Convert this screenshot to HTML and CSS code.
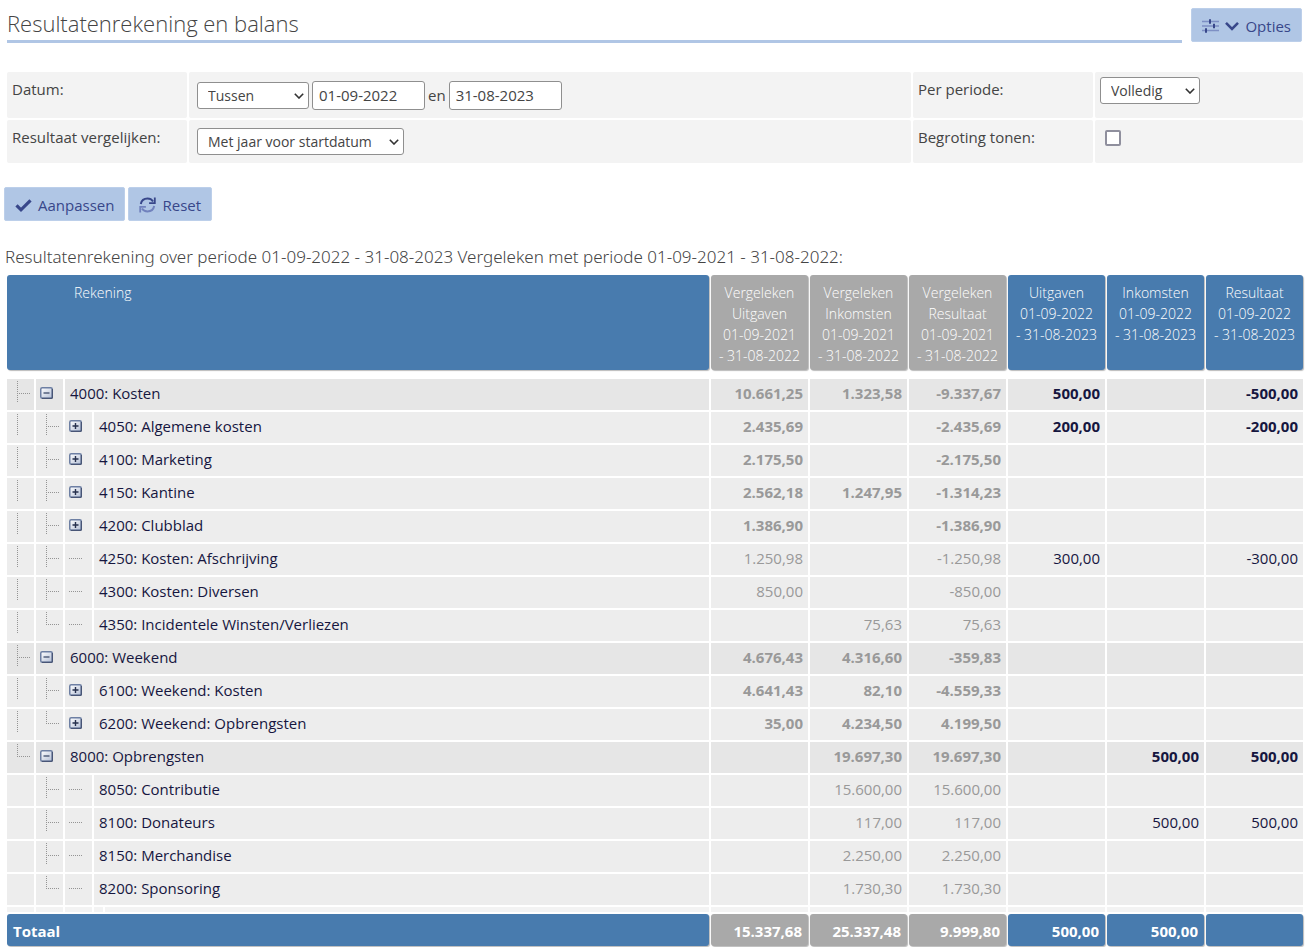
FILE: index.html
```html
<!DOCTYPE html>
<html lang="nl">
<head>
<meta charset="utf-8">
<meta name="viewport" content="width=device-width, initial-scale=1">
<title>Resultatenrekening en balans</title>
<link rel="stylesheet" href="styles.css">
</head>
<body>
<svg class="sprite" aria-hidden="true">
  <defs>
    <linearGradient id="face" x1="0" y1="0" x2="1" y2="1"><stop offset="0" stop-color="#ffffff"/><stop offset="1" stop-color="#b4bfd6"/></linearGradient>
  </defs>
  <symbol id="tee" viewBox="0 0 27 31"><path d="M10.5 2v22M12 14.500h11" class="dots"/></symbol>
  <symbol id="line" viewBox="0 0 27 31"><path d="M10.500 2v22" class="dots"/></symbol>
  <symbol id="ell" viewBox="0 0 27 31"><path d="M10.500 2v13M12 14.500h11" class="dots"/></symbol>
  <symbol id="dash" viewBox="0 0 27 31"><path d="M4 14.500h14" class="dots"/></symbol>
  <symbol id="minus" viewBox="0 0 13 12"><rect x=".75" y=".75" width="11.500" height="10.500" rx="1.500" fill="url(#face)" stroke="#6d7fa3" stroke-width="1.500"/><path d="M12.300 2v9.300H2" fill="none" stroke="#3f4c6b"/><path d="M3.500 6h6" stroke="#3f4c6b" stroke-width="1.300"/></symbol>
  <symbol id="plus" viewBox="0 0 13 12"><rect x=".75" y=".75" width="11.500" height="10.500" rx="1.500" fill="url(#face)" stroke="#6d7fa3" stroke-width="1.500"/><path d="M12.300 2v9.300H2" fill="none" stroke="#3f4c6b"/><path d="M3.500 6h6M6.500 3v6" stroke="#26304d" stroke-width="1.400"/></symbol>
  <symbol id="chevron" viewBox="0 0 10 6"><path d="M.8.8 5 5 9.200.8" fill="none" stroke="#333" stroke-width="1.600"/></symbol>
</svg>

<header class="page-head">
  <h1 class="title">Resultatenrekening en balans</h1>
  <button class="btn" type="button">
    <svg class="icon" viewBox="0 0 17 16" aria-hidden="true"><path d="M0 3.500h17M0 8h17M0 12.500h17" stroke="#7d8fc4" stroke-width="1.400"/><path d="M8 1.300v4.400M12 5.800v4.400M4 10.300v4.400" stroke="#38478a" stroke-width="2"/></svg>
    <svg class="icon-caret" viewBox="0 0 14 10" aria-hidden="true"><path d="M1 1.800 7 7.800l6-6" fill="none" stroke="#38478a" stroke-width="2.600"/></svg>
    Opties
  </button>
</header>

<form class="filters">
  <div class="fields">
    <label class="field-name" for="datum">Datum:</label>
    <div class="field main">
      <span class="select type"><select id="datum"><option>Tussen</option></select><svg aria-hidden="true"><use href="#chevron"/></svg></span>
      <input class="date" type="text" value="01-09-2022" aria-label="Startdatum">
      <span>en</span>
      <input class="date" type="text" value="31-08-2023" aria-label="Einddatum">
    </div>
    <label class="field-name" for="periode">Per periode:</label>
    <div class="field side">
      <span class="select period"><select id="periode"><option>Volledig</option></select><svg aria-hidden="true"><use href="#chevron"/></svg></span>
    </div>
    <label class="field-name" for="vergelijk">Resultaat vergelijken:</label>
    <div class="field main">
      <span class="select compare"><select id="vergelijk"><option>Met jaar voor startdatum</option></select><svg aria-hidden="true"><use href="#chevron"/></svg></span>
    </div>
    <label class="field-name" for="begroting">Begroting tonen:</label>
    <div class="field side"><input class="check" type="checkbox" id="begroting"></div>
  </div>
  <div class="actions">
    <button class="btn" type="submit">
      <svg class="icon" viewBox="0 0 17 16" aria-hidden="true"><path d="M1.500 8.300 6 12.800 15.500 3.300" fill="none" stroke="#38478a" stroke-width="3.200"/></svg>
      Aanpassen
    </button>
    <button class="btn" type="reset">
      <svg class="icon" viewBox="0 0 17 16" aria-hidden="true"><path d="M1.800 7C2.500 3.700 5.200 1.600 8.500 1.600c2.300 0 4.300 1 5.600 2.900" fill="none" stroke="#38478a" stroke-width="2"/><path d="M15.800.5v5.700h-5.700" fill="none" stroke="#38478a" stroke-width="1.800"/><path d="M15.200 9c-.7 3.300-3.400 5.400-6.700 5.400-2.300 0-4.300-1-5.600-2.900" fill="none" stroke="#7182bd" stroke-width="2"/><path d="M1.200 15.500V9.800h5.700" fill="none" stroke="#7182bd" stroke-width="1.800"/></svg>
      Reset
    </button>
  </div>
</form>

<h2 class="subtitle">Resultatenrekening over periode 01-09-2022 - 31-08-2023 Vergeleken met periode 01-09-2021 - 31-08-2022:</h2>

<table class="ledger">
  <colgroup><col class="tree"><col class="tree"><col class="tree"><col class="nub"><col><col class="amount" span="6"></colgroup>
  <thead>
    <tr>
      <th class="account" colspan="5" scope="col">Rekening</th>
      <th class="past" scope="col">Vergeleken Uitgaven<br>01-09-2021<br>- 31-08-2022</th>
      <th class="past" scope="col">Vergeleken Inkomsten<br>01-09-2021<br>- 31-08-2022</th>
      <th class="past" scope="col">Vergeleken Resultaat<br>01-09-2021<br>- 31-08-2022</th>
      <th scope="col">Uitgaven<br>01-09-2022<br>- 31-08-2023</th>
      <th scope="col">Inkomsten<br>01-09-2022<br>- 31-08-2023</th>
      <th scope="col">Resultaat<br>01-09-2022<br>- 31-08-2023</th>
    </tr>
  </thead>
  <tbody>
    <tr class="gap"><td colspan="11"></td></tr>
    <tr class="group sum"><td><svg><use href="#tee"/></svg></td><td><button class="toggle" aria-label="Inklappen"><svg><use href="#minus"/></svg></button></td><td class="name" colspan="3">4000: Kosten</td><td class="past">10.661,25</td><td class="past">1.323,58</td><td class="past">-9.337,67</td><td>500,00</td><td></td><td>-500,00</td></tr>
    <tr class="sum"><td><svg><use href="#line"/></svg></td><td><svg><use href="#tee"/></svg></td><td><button class="toggle" aria-label="Uitklappen"><svg><use href="#plus"/></svg></button></td><td class="name" colspan="2">4050: Algemene kosten</td><td class="past">2.435,69</td><td></td><td class="past">-2.435,69</td><td>200,00</td><td></td><td>-200,00</td></tr>
    <tr class="sum"><td><svg><use href="#line"/></svg></td><td><svg><use href="#tee"/></svg></td><td><button class="toggle" aria-label="Uitklappen"><svg><use href="#plus"/></svg></button></td><td class="name" colspan="2">4100: Marketing</td><td class="past">2.175,50</td><td></td><td class="past">-2.175,50</td><td></td><td></td><td></td></tr>
    <tr class="sum"><td><svg><use href="#line"/></svg></td><td><svg><use href="#tee"/></svg></td><td><button class="toggle" aria-label="Uitklappen"><svg><use href="#plus"/></svg></button></td><td class="name" colspan="2">4150: Kantine</td><td class="past">2.562,18</td><td class="past">1.247,95</td><td class="past">-1.314,23</td><td></td><td></td><td></td></tr>
    <tr class="sum"><td><svg><use href="#line"/></svg></td><td><svg><use href="#tee"/></svg></td><td><button class="toggle" aria-label="Uitklappen"><svg><use href="#plus"/></svg></button></td><td class="name" colspan="2">4200: Clubblad</td><td class="past">1.386,90</td><td></td><td class="past">-1.386,90</td><td></td><td></td><td></td></tr>
    <tr><td><svg><use href="#line"/></svg></td><td><svg><use href="#tee"/></svg></td><td><svg><use href="#dash"/></svg></td><td class="name" colspan="2">4250: Kosten: Afschrijving</td><td class="past">1.250,98</td><td></td><td class="past">-1.250,98</td><td>300,00</td><td></td><td>-300,00</td></tr>
    <tr><td><svg><use href="#line"/></svg></td><td><svg><use href="#tee"/></svg></td><td><svg><use href="#dash"/></svg></td><td class="name" colspan="2">4300: Kosten: Diversen</td><td class="past">850,00</td><td></td><td class="past">-850,00</td><td></td><td></td><td></td></tr>
    <tr><td><svg><use href="#line"/></svg></td><td><svg><use href="#ell"/></svg></td><td><svg><use href="#dash"/></svg></td><td class="name" colspan="2">4350: Incidentele Winsten/Verliezen</td><td></td><td class="past">75,63</td><td class="past">75,63</td><td></td><td></td><td></td></tr>
    <tr class="group sum"><td><svg><use href="#tee"/></svg></td><td><button class="toggle" aria-label="Inklappen"><svg><use href="#minus"/></svg></button></td><td class="name" colspan="3">6000: Weekend</td><td class="past">4.676,43</td><td class="past">4.316,60</td><td class="past">-359,83</td><td></td><td></td><td></td></tr>
    <tr class="sum"><td><svg><use href="#line"/></svg></td><td><svg><use href="#tee"/></svg></td><td><button class="toggle" aria-label="Uitklappen"><svg><use href="#plus"/></svg></button></td><td class="name" colspan="2">6100: Weekend: Kosten</td><td class="past">4.641,43</td><td class="past">82,10</td><td class="past">-4.559,33</td><td></td><td></td><td></td></tr>
    <tr class="sum"><td><svg><use href="#line"/></svg></td><td><svg><use href="#ell"/></svg></td><td><button class="toggle" aria-label="Uitklappen"><svg><use href="#plus"/></svg></button></td><td class="name" colspan="2">6200: Weekend: Opbrengsten</td><td class="past">35,00</td><td class="past">4.234,50</td><td class="past">4.199,50</td><td></td><td></td><td></td></tr>
    <tr class="group sum"><td><svg><use href="#ell"/></svg></td><td><button class="toggle" aria-label="Inklappen"><svg><use href="#minus"/></svg></button></td><td class="name" colspan="3">8000: Opbrengsten</td><td></td><td class="past">19.697,30</td><td class="past">19.697,30</td><td></td><td>500,00</td><td>500,00</td></tr>
    <tr><td></td><td><svg><use href="#tee"/></svg></td><td><svg><use href="#dash"/></svg></td><td class="name" colspan="2">8050: Contributie</td><td></td><td class="past">15.600,00</td><td class="past">15.600,00</td><td></td><td></td><td></td></tr>
    <tr><td></td><td><svg><use href="#tee"/></svg></td><td><svg><use href="#dash"/></svg></td><td class="name" colspan="2">8100: Donateurs</td><td></td><td class="past">117,00</td><td class="past">117,00</td><td></td><td>500,00</td><td>500,00</td></tr>
    <tr><td></td><td><svg><use href="#tee"/></svg></td><td><svg><use href="#dash"/></svg></td><td class="name" colspan="2">8150: Merchandise</td><td></td><td class="past">2.250,00</td><td class="past">2.250,00</td><td></td><td></td><td></td></tr>
    <tr><td></td><td><svg><use href="#ell"/></svg></td><td><svg><use href="#dash"/></svg></td><td class="name" colspan="2">8200: Sponsoring</td><td></td><td class="past">1.730,30</td><td class="past">1.730,30</td><td></td><td></td><td></td></tr>
    <tr class="closing"><td></td><td></td><td></td><td></td><td></td><td></td><td></td><td></td><td></td><td></td><td></td></tr>
  </tbody>
  <tfoot>
    <tr><th class="total" colspan="5" scope="row">Totaal</th><td class="past">15.337,68</td><td class="past">25.337,48</td><td class="past">9.999,80</td><td>500,00</td><td>500,00</td><td></td></tr>
  </tfoot>
</table>
</body>
</html>
```

FILE: styles.css
```css
* {
  box-sizing: border-box;
}

body {
  margin: 0;
  padding: 8px 1px 0 5px;
  background: #fff;
  color: #444;
  font: 15px/21px "Open Sans", "Noto Sans", sans-serif;
}

button,
input,
select {
  font: inherit;
  color: inherit;
}

.sprite {
  position: absolute;
  width: 0;
  height: 0;
}

.dots {
  fill: none;
  stroke: #949494;
  stroke-dasharray: 1 1;
}

/* Page heading */
.page-head {
  display: flex;
  align-items: flex-start;
  gap: 9px;
  padding: 0 3px 0 2px;
}

.title {
  flex: 1;
  margin: 0;
  padding-bottom: 2px;
  border-bottom: 3px solid #b0c6e5;
  font-size: 22px;
  line-height: 30px;
  font-weight: 300;
}

.btn {
  display: inline-flex;
  align-items: center;
  gap: 6px;
  height: 34px;
  padding: 2px 10px 0;
  border: 1px solid #bccfea;
  border-radius: 2px;
  background: #b0c6e5;
  color: #38478a;
  white-space: nowrap;
}

.icon {
  width: 17px;
  height: 16px;
}

.icon-caret {
  width: 14px;
  height: 10px;
}

/* Filters */
.fields {
  display: grid;
  grid-template-columns: 180px 1fr 180px 208px;
  grid-template-rows: 46px 43px;
  gap: 2px;
  margin: 29px 2px 0;
}

.field-name,
.field {
  border-radius: 2px;
  background: #f3f3f3;
}

.field-name {
  padding: 7px 5px;
}

.field {
  display: flex;
}

.main {
  align-items: center;
  gap: 3px;
  padding: 0 8px;
}

.side {
  align-items: flex-start;
  padding: 5px;
}

.select {
  position: relative;
  display: inline-block;
}

.select select {
  width: 100%;
  height: 27px;
  padding: 0 10px;
  border: 1px solid #8f8f8f;
  border-radius: 3px;
  background: #fff;
  appearance: none;
  font-size: 14px;
}

.select svg {
  position: absolute;
  right: 5px;
  top: 11px;
  width: 10px;
  height: 6px;
  pointer-events: none;
}

.type {
  width: 112px;
}

.compare {
  width: 207px;
}

.period {
  width: 100px;
}

.date {
  width: 113px;
  height: 29px;
  padding: 0 6px;
  border: 1px solid #8f8f8f;
  border-radius: 3px;
  background: #fff;
}

.check {
  width: 16px;
  height: 16px;
  margin: 5px;
  border: 2px solid #8f8f9d;
  border-radius: 2px;
  background: #fff;
  appearance: none;
}

.check:checked {
  background: #487bae;
}

.actions {
  display: flex;
  gap: 3px;
  margin: 24px 0 0 -1px;
}

/* Ledger */
.subtitle {
  margin: 22px 0 3px;
  font-family: "Noto Sans", "Open Sans", sans-serif;
  font-size: 17px;
  line-height: 27px;
  font-weight: 300;
}

.ledger {
  width: 100%;
  table-layout: fixed;
  border-collapse: separate;
  border-spacing: 2px;
}

.tree {
  width: 27px;
}

.nub {
  width: 9px;
}

.amount {
  width: 97px;
}

.ledger th,
.ledger td {
  padding: 0;
}

.ledger thead th {
  height: 95px;
  padding: 7px 4px 4px;
  vertical-align: top;
  font-size: 14px;
  font-weight: 300;
}

.ledger thead th,
.ledger tfoot th,
.ledger tfoot td {
  border-radius: 3px;
  background: #487bae;
  box-shadow: 1px 1px 1px #bbb;
  color: #fff;
}

.ledger thead .past,
.ledger tfoot .past {
  background: #a9a9a9;
  color: #fff;
}

.ledger thead .account {
  padding-left: 67px;
  text-align: left;
}

.ledger tbody td {
  height: 31px;
  background: #ededed;
  color: #16163f;
  text-align: right;
}

.ledger tbody .group td {
  background: #e6e6e6;
}

.ledger tbody td:nth-last-child(-n + 6) {
  padding: 0 5px 2px 0;
}

.ledger .sum td {
  font-weight: 700;
}

.ledger tbody .past {
  color: #999;
}

.ledger tbody tr .name {
  padding: 0 0 2px 5px;
  text-align: left;
  font-weight: 400;
}

.ledger tbody .gap td {
  height: 5px;
  padding: 0;
  background: none;
}

.ledger tbody .closing td {
  height: 5px;
  padding: 0;
  background: #f3f3f3;
}

.ledger td > svg {
  display: block;
  width: 27px;
  height: 31px;
}

.toggle {
  display: block;
  margin: 0 0 4px 4px;
  padding: 0;
  border: 0;
  background: none;
}

.toggle svg {
  display: block;
  width: 13px;
  height: 12px;
}

.ledger tfoot th,
.ledger tfoot td {
  height: 32px;
  padding: 2px 6px 0;
  text-align: right;
  font-weight: 700;
}

.ledger tfoot .total {
  text-align: left;
}
```
